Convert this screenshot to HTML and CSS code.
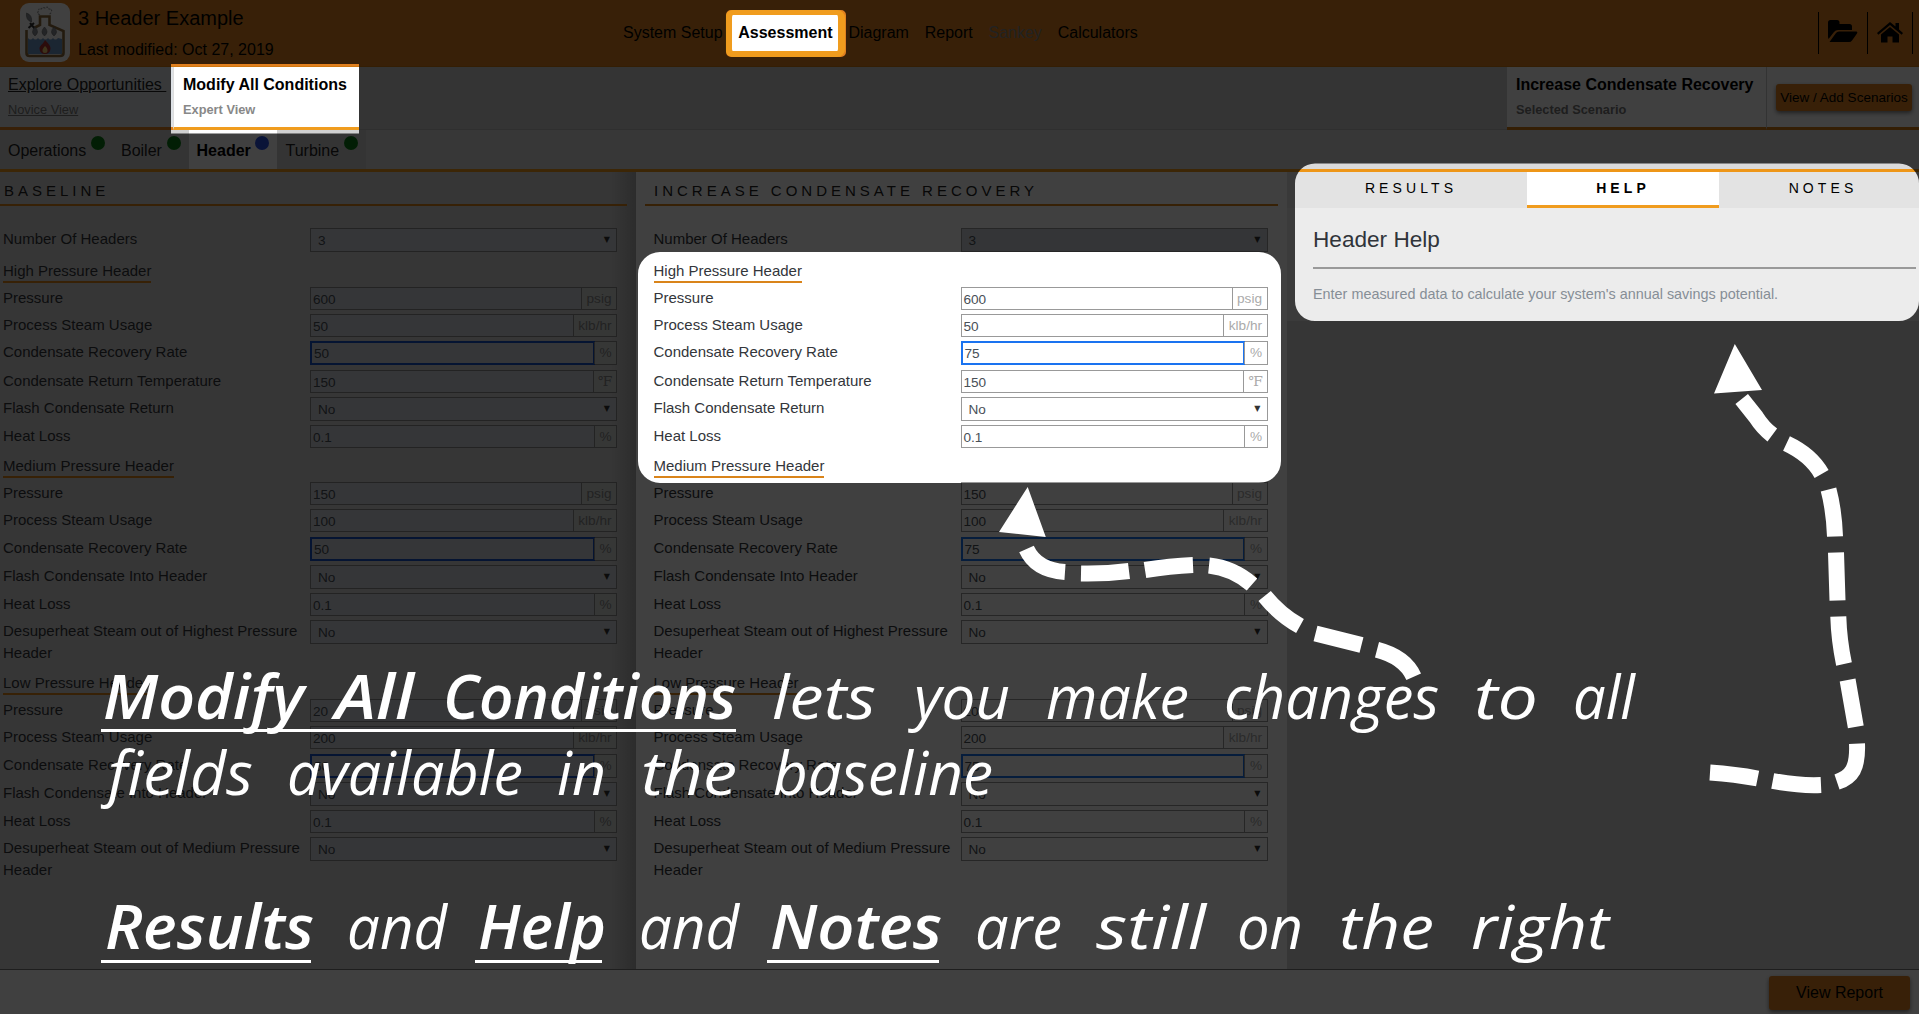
FILE: index.html
```html
<!DOCTYPE html>
<html lang="en">
<head>
<meta charset="utf-8">
<title>3 Header Example</title>
<link rel="stylesheet" href="styles.css">
</head>
<body>
<div class="app">
  <header class="topbar">
    <div class="brand">
      <svg class="logo" viewBox="0 0 50 59">
        <rect width="50" height="59" rx="9" fill="#fff"/>
        <path d="M6.500 27V50q0 3 3 3H40q3.500 0 3.500-3V28L29.500 22V13.500H20V22L14 25" fill="#fff" stroke="#8a6a3a" stroke-width="2.600"/>
        <path d="M8 35q2.500 3 5 0 2.500 3 5 0 2.500 3 5 0 2.500 3 5 0 2.500 3 5 0 2.500 3 5 0l4 1V51H8z" fill="#6c96c8"/>
        <path d="M25 37c5 5 5.500 7 5.500 8.500a5.500 5.500 0 0 1-11 0c0-3 3.500-4 5.500-8.500z" fill="#b03030"/>
        <path d="M25 43c2 2 2.500 3 2.500 4.500a2.500 2.500 0 0 1-5 0c0-1.500 1-2.500 2.500-4.500z" fill="#f4d070"/>
        <path d="M20 12q-4-2-1-4-1-3 2-2 2-2 4-1 3-2 4 1 4 0 2 3 0 2-2 2" fill="none" stroke="#999" stroke-width="1.200" stroke-dasharray="2 1"/>
        <path d="M6.500 10q6 2 5 9-6-2-5-9z" fill="#8a8f96" stroke="#666" stroke-width=".6"/>
        <path d="M10 20l5 6M8.500 25l5.500-5" fill="none" stroke="#333" stroke-width="2"/>
        <path d="M15 24q5 5 0 9-5-4 0-9zM24.500 24q5 5 0 9-5-4 0-9zM34 24q5 5 0 9-5-4 0-9z" fill="#8a9098" stroke="#666" stroke-width=".6"/>
      </svg>
      <div class="brand-text">
        <div class="brand-title">3 Header Example</div>
        <div class="brand-date">Last modified: Oct 27, 2019</div>
      </div>
    </div>
    <nav class="nav">
      <span>System Setup</span>
      <span class="nav-active">Assessment</span>
      <span>Diagram</span>
      <span>Report</span>
      <span class="nav-off">Sankey</span>
      <span>Calculators</span>
    </nav>
    <div class="tools">
      <div class="tool tool-folder"><svg width="30" height="22" viewBox="0 0 30 22"><path d="M0 17V2.500Q0 0 2.500 0H9Q11.500 0 11.500 2.500V4H21.500Q24 4 24 6.500V10H10Q7.500 10 6 12L.5 19zM1.500 22L8 13Q9 11.500 11 11.500H28.500Q30 12 29 13.500L24 20.500Q23 22 21 22z"/></svg></div>
      <div class="tool tool-home"><svg width="26" height="21" viewBox="0 0 26 21"><path d="M13 0L0 11 1.300 12.700 13 3 24.700 12.700 26 11 22 7.600V1H18.500V4.600zM13 5L4 12.600V20.500H10.500V14.500H15.500V20.500H22V12.600z"/></svg></div>
    </div>
  </header>

  <div class="views">
    <div class="view view-novice"><a class="view-name">Explore Opportunities&nbsp;</a><span class="view-sub">Novice View</span></div>
    <div class="view view-expert"><span class="view-name">Modify All Conditions</span><span class="view-sub">Expert View</span></div>
    <div class="view view-scenario"><span class="view-name">Increase Condensate Recovery</span><span class="view-sub">Selected Scenario</span></div>
    <div class="view-action"><button class="btn btn-small">View / Add Scenarios</button></div>
  </div>

  <div class="tabs">
    <div class="tab">Operations<i class="dot"></i></div>
    <div class="tab">Boiler<i class="dot"></i></div>
    <div class="tab tab-on">Header<i class="dot dot-blue"></i></div>
    <div class="tab">Turbine<i class="dot"></i></div>
  </div>

  <main class="main">
    <section class="pane baseline" data-rate="50"><h2>BASELINE</h2></section>
    <section class="pane modified" data-rate="75"><h2>INCREASE CONDENSATE RECOVERY</h2></section>
    <aside class="side">
      <div class="side-card">
        <div class="side-tabs"><span>RESULTS</span><span class="side-on">HELP</span><span>NOTES</span></div>
        <div class="side-body">
          <h3>Header Help</h3>
          <p>Enter measured data to calculate your system's annual savings potential.</p>
        </div>
      </div>
    </aside>
  </main>

  <footer class="footer"><button class="btn btn-report">View Report</button></footer>
</div>

<svg class="tour" width="1919" height="1014" viewBox="0 0 1919 1014">
  <path class="dim" fill-rule="evenodd" d="M0 0H1919V1014H0z
    M171 64H359V133.500H171z
    M731 10H841a5 5 0 0 1 5 5V52a5 5 0 0 1-5 5H731a5 5 0 0 1-5-5V15a5 5 0 0 1 5-5z
    M660 252H1259a22 22 0 0 1 22 22V461a22 22 0 0 1-22 22H660a22 22 0 0 1-22-22V274a22 22 0 0 1 22-22z
    M1315 163.500H1899a20 20 0 0 1 20 20V301a20 20 0 0 1-20 20H1315a20 20 0 0 1-20-20V183.500a20 20 0 0 1 20-20z"/>
  <g class="arrow">
    <path d="M1026.500 549Q1036 570 1065 572M1081 573.500Q1105 574 1129 571M1145 570Q1170 566 1193 565M1209 565.500Q1233 568 1252 584.500M1264.600 596Q1280 615 1300 626M1315.500 633.400L1361.500 645M1377 649.700Q1405 657 1413.700 676.700"/>
    <path d="M1741.700 399L1756 417Q1763 428 1772.300 435M1786.500 443.500Q1811 455 1821.600 474M1828.500 489.500Q1834 510 1835 536.500M1836 552.400L1837.500 600.600M1838.300 616.500Q1839 640 1844 664M1847.600 680L1855.800 726.800M1857 743.600C1858 768 1852 777 1837 782M1821 785Q1800 786 1772.700 781M1757.600 778.500Q1735 774 1710 772.400"/>
  </g>
  <path class="head" d="M1027.700 487L999 532 1045.800 537zM1734.800 344L1714 393.500 1762 390z"/>
  <g class="rule"><path d="M101 730.500H736M101 961.500H311M475 961.500H602M767 961.500H939"/></g>
  <g class="note">
    <text transform="translate(0 719) scale(1 1.07)"><tspan class="key" x="103" textLength="201" lengthAdjust="spacingAndGlyphs">Modify</tspan> <tspan class="key" x="335" textLength="79" lengthAdjust="spacingAndGlyphs">All</tspan> <tspan class="key" x="443" textLength="293" lengthAdjust="spacingAndGlyphs">Conditions</tspan> <tspan x="772" textLength="104" lengthAdjust="spacingAndGlyphs">lets</tspan> <tspan x="914" textLength="96" lengthAdjust="spacingAndGlyphs">you</tspan> <tspan x="1046" textLength="143" lengthAdjust="spacingAndGlyphs">make</tspan> <tspan x="1224" textLength="215" lengthAdjust="spacingAndGlyphs">changes</tspan> <tspan x="1474" textLength="64" lengthAdjust="spacingAndGlyphs">to</tspan> <tspan x="1573" textLength="62" lengthAdjust="spacingAndGlyphs">all</tspan></text>
    <text transform="translate(0 795) scale(1 1.07)"><tspan x="108" textLength="145" lengthAdjust="spacingAndGlyphs">fields</tspan> <tspan x="287" textLength="236" lengthAdjust="spacingAndGlyphs">available</tspan> <tspan x="557" textLength="49" lengthAdjust="spacingAndGlyphs">in</tspan> <tspan x="641" textLength="96" lengthAdjust="spacingAndGlyphs">the</tspan> <tspan x="773" textLength="220" lengthAdjust="spacingAndGlyphs">baseline</tspan></text>
    <text transform="translate(0 949) scale(1 1.07)"><tspan class="key" x="105" textLength="209" lengthAdjust="spacingAndGlyphs">Results</tspan> <tspan x="347" textLength="100" lengthAdjust="spacingAndGlyphs">and</tspan> <tspan class="key" x="478" textLength="128" lengthAdjust="spacingAndGlyphs">Help</tspan> <tspan x="639" textLength="100" lengthAdjust="spacingAndGlyphs">and</tspan> <tspan class="key" x="770" textLength="172" lengthAdjust="spacingAndGlyphs">Notes</tspan> <tspan x="975" textLength="87" lengthAdjust="spacingAndGlyphs">are</tspan> <tspan x="1096" textLength="110" lengthAdjust="spacingAndGlyphs">still</tspan> <tspan x="1237" textLength="66" lengthAdjust="spacingAndGlyphs">on</tspan> <tspan x="1339" textLength="95" lengthAdjust="spacingAndGlyphs">the</tspan> <tspan x="1471" textLength="138" lengthAdjust="spacingAndGlyphs">right</tspan></text>
  </g>
</svg>
<script src="form.js"></script>
</body>
</html>
```
FILE: form.js
```js
// Each row: [label, value, unit]; a missing unit makes a select, a lone label makes a section title.
function rows(rate) {
  return [
    ['Number Of Headers', '3'],
    ['High Pressure Header'],
    ['Pressure', '600', 'psig'],
    ['Process Steam Usage', '50', 'klb/hr'],
    ['Condensate Recovery Rate', rate, '%', 'changed'],
    ['Condensate Return Temperature', '150', '℉'],
    ['Flash Condensate Return', 'No'],
    ['Heat Loss', '0.1', '%'],
    ['Medium Pressure Header'],
    ['Pressure', '150', 'psig'],
    ['Process Steam Usage', '100', 'klb/hr'],
    ['Condensate Recovery Rate', rate, '%', 'changed'],
    ['Flash Condensate Into Header', 'No'],
    ['Heat Loss', '0.1', '%'],
    ['Desuperheat Steam out of Highest Pressure Header', 'No', '', 'tall'],
    ['Low Pressure Header'],
    ['Pressure', '20', 'psig'],
    ['Process Steam Usage', '200', 'klb/hr'],
    ['Condensate Recovery Rate', rate, '%', 'changed'],
    ['Flash Condensate Into Header', 'No'],
    ['Heat Loss', '0.1', '%'],
    ['Desuperheat Steam out of Medium Pressure Header', 'No', '', 'tall']
  ];
}
document.querySelectorAll('.pane').forEach(function (pane) {
  var html = '';
  rows(pane.dataset.rate).forEach(function (r, i) {
    if (r.length === 1) {
      html += '<div class="group"><span>' + r[0] + '</span></div>';
      return;
    }
    var kind = r[2] ? '' : ' select';
    html += '<div class="row' + kind + (r[3] ? ' ' + r[3] : '') + (i === 0 ? ' count' : '') + '">' +
      '<label>' + r[0] + '</label><div class="field"><span class="value">' + r[1] + '</span>' +
      (r[2] ? '<span class="unit' + (r[2] === '℉' ? ' degree' : '') + '">' + r[2] + '</span>' : '<span class="caret">▼</span>') + '</div></div>';
  });
  pane.insertAdjacentHTML('beforeend', '<div class="form">' + html + '</div>');
});
```
FILE: styles.css
```css
* { box-sizing: border-box; }
body {
  margin: 0;
  font-family: "Liberation Sans", Arial, sans-serif;
  font-size: 16px;
  color: #000;
  overflow: hidden;
}
.app { width: 1919px; height: 1014px; display: flex; flex-direction: column; background: #d8d8d8; }

.topbar { height: 67px; flex: none; background: #e08020; display: grid; grid-template-columns: 623px 1fr 101px; border-bottom: 1px solid #d07810; }
.brand { display: flex; padding: 3px 0 0 20px; gap: 8px; }
.logo { width: 50px; height: 59px; }
.brand-title { font-size: 20px; line-height: 24px; padding-top: 3px; }
.brand-date { line-height: 20px; padding-top: 10px; }
.nav { display: flex; align-items: center; height: 66px; }
.nav span { margin-right: 15.800px; }
.nav .nav-active { font-weight: bold; background: #fff; border: 5px solid #f09c1e; border-width: 5px 7px 6px; border-radius: 8px; height: 47px; width: 120px; line-height: 35px; text-align: center; margin: 1px 3px 0 -13px; }
.nav .nav-off { color: #878787; }
.tools { display: flex; padding-top: 12px; height: 54px; }
.tool { border-left: 1px solid #000; }
.tool-folder { width: 49px; padding: 8px 0 0 9px; }
.tool-home { width: 46px; padding: 10px 0 0 9px; border-right: 1px solid #000; }
.tool svg { display: block; }

.views { height: 63px; flex: none; display: flex; background: #d0d0d0; border-bottom: 1px solid #bbb; }
.view { height: 63px; border-bottom: 3px solid #f09c1e; display: flex; flex-direction: column; padding: 7px 0 0 8px; flex: none; }
.view-name { line-height: 21px; white-space: nowrap; }
.view-sub { font-size: 12.8px; line-height: 20px; margin-top: 5px; color: #888; font-weight: bold; }
.view-novice { width: 173px; background: #dee2e6; border-color: #e08020; }
.view-novice .view-name { text-decoration: underline; color: #222; align-self: flex-start; }
.view-novice .view-sub { font-weight: normal; text-decoration: underline; color: #777; }
.view-expert { width: 186px; background: #fff; padding-left: 9px; margin-right: auto; border-left: 1px solid #ddd; }
.view-expert .view-name, .view-scenario .view-name { font-weight: bold; }
.view-scenario { width: 259px; background: #fff; border-color: #d07810; padding-left: 9px; }
.view-scenario .view-sub { color: #777; }
.view-action { width: 153px; height: 63px; background: #fff; border-bottom: 3px solid #d07810; border-left: 1px solid #ccc; padding: 17px 0 0 9px; }

.btn { font-family: inherit; border: 0; border-radius: 3px; background: #e08020; color: #000; padding: 0; display: block; box-shadow: 0 2px 4px rgba(0, 0, 0, .5); }
.btn-small { width: 136px; height: 27px; font-size: 13.5px; }
.btn-report { width: 141px; height: 34px; font-size: 16px; }

.tabs { height: 42px; flex: none; display: flex; background: #dadada; border-bottom: 3px solid #ee9618; }
.tab { display: flex; padding: 0 8px; gap: 4.700px; line-height: 41px; background: #d0d0d0; color: #222; }
.tab-on { background: #fff; font-weight: bold; color: #000; }
.dot { width: 14px; height: 14px; border-radius: 50%; background: #0b7a14; margin-top: 6px; }
.dot-blue { background: #2a4fe0; }

.main { flex: 1; display: flex; min-height: 0; }
.pane h2 { margin: 0; height: 34px; border-bottom: 2px solid #d9841a; font-weight: normal; font-size: 15px; letter-spacing: 4px; line-height: 37px; color: #222; }
.pane { flex: none; color: #33363b; }
.baseline { width: 636px; padding-right: 9px; background: linear-gradient(to right, #d8d8d8 610px, #b0b0b0 636px); }
.baseline h2 { padding-left: 4px; }
.baseline .form { padding-left: 3px; }
.modified { width: 651px; padding: 0 9px; background: #fff; }
.modified h2 { padding-left: 9px; }
.modified .form { padding-left: 8.500px; }

.form { padding-top: 22px; font-size: 15px; }
.group { height: 30.5px; }
.group span { display: inline-block; height: 26px; line-height: 27px; border-bottom: 2px solid #d9841a; }
.row { display: flex; height: 27.1px; }
.row label { width: 307px; flex: none; line-height: 22px; }
.field { width: 307px; height: 23px; display: flex; border: 1px solid #999; font-size: 13.6px; color: #495057; }
.baseline .field { background: #d4d8de; border-color: #8c8c8c; }
.value { flex: 1; padding-left: 2px; line-height: 23px; }
.unit { border-left: 1px solid #999; padding: 0 4.500px; line-height: 21px; color: #aaa; }
.degree { font-family: "Liberation Serif", "DejaVu Serif", serif; padding: 0 4px; }
.baseline .unit { background: #d6dad8; color: #878787; border-color: #8c8c8c; }
.select, .changed { height: 28.1px; }
.select .field, .changed .field { height: 24px; }
.select .value { padding-left: 7px; line-height: 24px; }
.changed .value { outline: 2px solid #1a73f0; outline-offset: -1px; padding-left: 3px; }
.baseline .changed .value { outline-color: #1450c8; }
.modified .count .field { background: #ced4da; }
.caret { font-size: 8px; line-height: 22px; padding-right: 6px; font-family: "DejaVu Sans", sans-serif; color: #333; }
.count { height: 28.8px; }
.tall { height: 49px; }
.tall label { line-height: 22px; }

.side { flex: 1; background: #d6d6d6; }
.side-card { height: 149px; background: #ececec; }
.side-tabs { display: grid; grid-template-columns: 240px 192px 200px; height: 36px; background: #e3e3e3; font-size: 14px; letter-spacing: 4.100px; text-align: center; line-height: 32px; }
.side-tabs span { padding-left: 8px; }
.side-tabs .side-on { background: #fff; border-bottom: 3px solid #f09c1e; font-weight: bold; padding-left: 0; }
.side-body { padding: 16px 3px 0 26px; }
.side-body h3 { margin: 0; font-weight: normal; font-size: 22.6px; line-height: 32px; height: 45px; border-bottom: 2px solid #999; color: #30343a; }
.side-body p { margin: 15px 0 0; font-size: 14.4px; line-height: 20px; color: #868e96; }

.footer { height: 45px; flex: none; border-top: 1px solid #777; background: #fff; display: flex; justify-content: flex-end; padding: 6px 9px 0 0; }

.tour { position: absolute; left: 0; top: 0; }
.dim { fill: #000; fill-opacity: .75; }
.arrow path { fill: none; stroke: #fff; stroke-width: 16; }
.head { fill: #fff; }
.rule path { stroke: #fff; stroke-width: 3; }
.note text { font-family: "Open Sans", "Noto Sans", sans-serif; font-style: italic; font-size: 57px; font-weight: 500; fill: #fff; }
.note .key { font-weight: 600; }
```
